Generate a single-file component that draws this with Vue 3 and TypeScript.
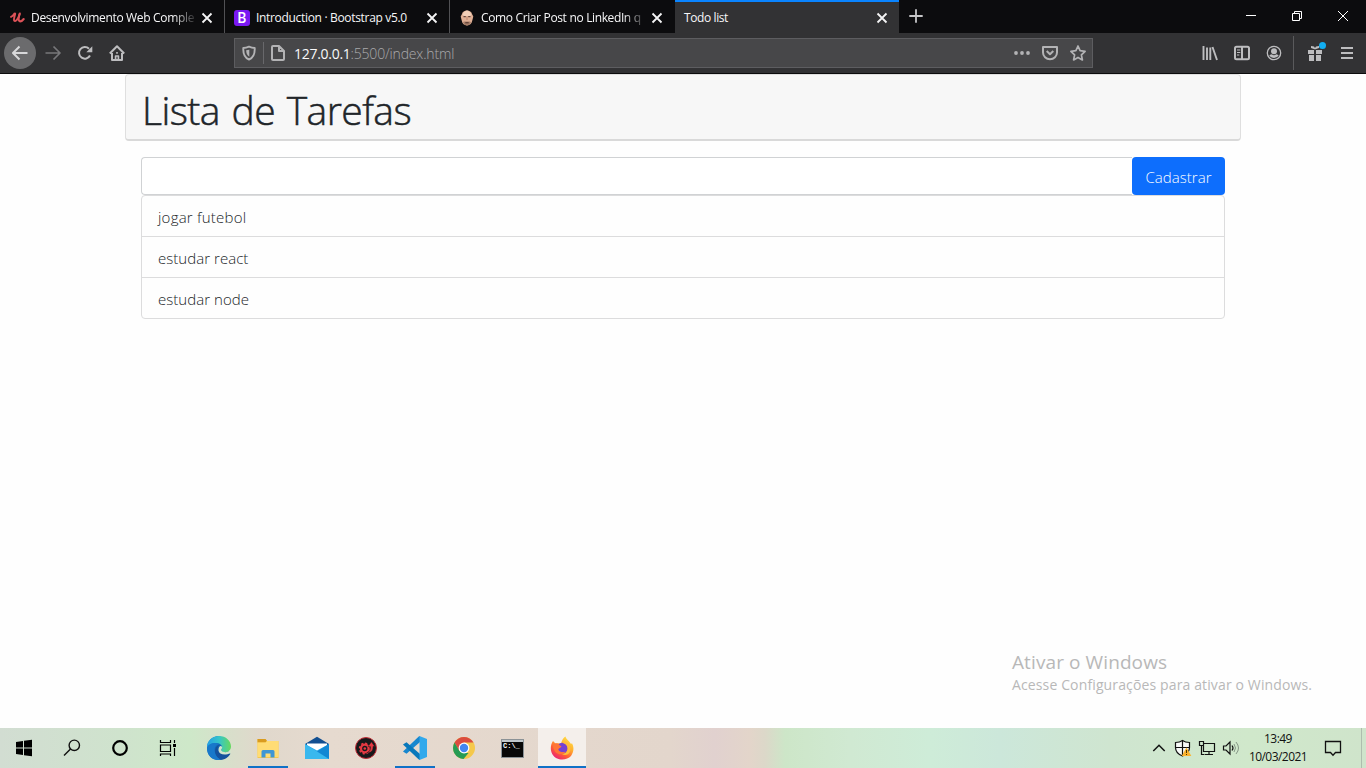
<script setup lang="ts">
import { ref } from 'vue'

interface Tab {
  title: string
  icon: 'udemy' | 'bootstrap' | 'face' | null
  active: boolean
  faded: boolean
  size: string
}

const tabs: Tab[] = [
  { title: 'Desenvolvimento Web Comple', icon: 'udemy', active: false, faded: true, size: 't1' },
  { title: 'Introduction · Bootstrap v5.0', icon: 'bootstrap', active: false, faded: false, size: 't2' },
  { title: 'Como Criar Post no LinkedIn q', icon: 'face', active: false, faded: true, size: 't3' },
  { title: 'Todo list', icon: null, active: true, faded: false, size: 't4' },
]

const tasks = ref<string[]>(['jogar futebol', 'estudar react', 'estudar node'])
const draft = ref('')

function addTask(): void {
  const text = draft.value.trim()
  if (!text) return
  tasks.value.push(text)
  draft.value = ''
}
</script>

<template>
  <div class="screen">
    <header class="tabstrip">
      <div v-for="tab in tabs" :key="tab.title" class="tab" :class="{ active: tab.active }">
        <svg v-if="tab.icon === 'udemy'" class="favicon" viewBox="0 0 16 16">
          <path d="M2 6.800C3.800 6 4.600 4.600 5.600 3.500C7.500 2.400 4 8.800 5.200 10.700C6.500 12.300 9.500 8.500 10.600 4.300" fill="none" stroke="#dc5258" stroke-width="1.900" stroke-linecap="round" stroke-linejoin="round" />
          <path d="M10.800 3.500C9.600 7 8.900 10.700 10.700 11.300C12.300 11.600 13.500 10.600 14.700 9" fill="none" stroke="#dc5258" stroke-width="2.100" stroke-linecap="round" />
        </svg>
        <span v-else-if="tab.icon === 'bootstrap'" class="favicon bs">B</span>
        <svg v-else-if="tab.icon === 'face'" class="favicon" viewBox="0 0 16 16">
          <path d="M3 4C3.500-.8 12.500-.8 13 4L14.300 6.500L13.300 10.500C12.300 17 3.700 17 2.700 10.500L1.700 6.500z" fill="#e0b095" />
          <path d="M3.500 4.500Q8-3.500 12.500 4.500L11 6H5z" fill="#f2cfb8" />
          <path d="M4 12L5.500 11.500H10.500L12 12Q11 15.400 8 15.400T4 12z" fill="#a47b66" />
          <path d="M4.500 6.700h2.300M9.200 6.700h2.300M6.300 12.800h3.400" stroke="#4a3029" />
          <path d="M8 6.500v3.500" stroke="#bd866c" />
        </svg>
        <span class="title" :class="[tab.size, { faded: tab.faded }]">{{ tab.title }}</span>
        <svg class="close" viewBox="0 0 12 12"><path d="M1.500 1.500l9 9M10.500 1.500l-9 9" stroke="#f5f5f6" stroke-width="1.800" /></svg>
      </div>
      <svg class="plus" viewBox="0 0 14 14"><path d="M7 .3v13.400M.3 7h13.400" stroke="#c6c6c8" stroke-width="1.800" /></svg>
      <div class="window-buttons">
        <svg viewBox="0 0 46 32"><path d="M18 15.500h10" stroke="#fff" /></svg>
        <svg viewBox="0 0 46 32" fill="none" stroke="#fff"><path d="M18.500 13.500h7v7h-7zM20.500 13.500v-2h7v7h-2" /></svg>
        <svg viewBox="0 0 46 32"><path d="M18 11l10 10M28 11l-10 10" stroke="#fff" /></svg>
      </div>
    </header>

    <nav class="toolbar">
      <div class="nav-left">
        <span class="tool back">
          <svg viewBox="0 0 16 16"><path d="M15.500 8H1.500M7.500 1.500L1 8l6.500 6.500" /></svg>
        </span>
        <span class="tool dim">
          <svg viewBox="0 0 16 16"><path d="M.5 8h14M8.500 1.500L15 8l-6.500 6.500" stroke-width="1.700" /></svg>
        </span>
        <span class="tool">
          <svg viewBox="0 0 16 16"><path d="M13 10.500A5.800 5.800 0 1 1 12 3.800" /><path d="M15.300 1.300v6h-6z" class="solid" /></svg>
        </span>
        <span class="tool">
          <svg viewBox="0 0 16 16"><path d="M.8 8.500L8 1.300l7.200 7.200M3 8v7h10V8" /><path d="M6.600 15v-4h2.800v4M7.200 7.800h1.600" stroke-width="1.700" /></svg>
        </span>
      </div>
      <div class="urlbar">
        <svg class="shield" viewBox="0 0 16 16"><path d="M8 1.700C10 2.600 12 3 13.700 3C14 9 12 13 8 14.500C4 13 2 9 2.300 3C4 3 6 2.600 8 1.700z" stroke-width="1.900" /><path d="M8.300 4.800v7C6 10.300 5.200 8 5.200 5.300z" class="solid" /></svg>
        <i class="url-sep"></i>
        <svg class="page" viewBox="0 0 16 16"><path d="M3 1h6l5 5v8q0 1-1 1H3q-1 0-1-1V2q0-1 1-1zM9 1v5h5" /></svg>
        <span class="url"><b>127.0.0.1</b>:5500/index.html</span>
        <div class="url-actions">
          <svg viewBox="0 0 16 16"><g class="solid"><circle cx="2" cy="8" r="1.900" /><circle cx="8" cy="8" r="1.900" /><circle cx="14" cy="8" r="1.900" /></g></svg>
          <svg viewBox="0 0 16 16"><path d="M1 2h14v5.500a7 6.700 0 0 1-14 0z" /><path d="M4.700 6L8 9.200 11.300 6" /></svg>
          <svg viewBox="0 0 16 16"><path d="M8 1l2.100 4.700 5 .6-3.700 3.500 1 5.100L8 12.400 3.600 14.900l1-5.100L.9 6.300l5-.6z" stroke-width="1.700" /></svg>
        </div>
      </div>
      <div class="nav-right">
        <span class="tool"><svg viewBox="0 0 16 16"><path d="M1.500 1v14M5 2.500V15M8.300 2.500V15M10.500 2l4.500 13" stroke-width="1.900" /></svg></span>
        <span class="tool"><svg viewBox="0 0 16 16"><rect x="1" y="1.800" width="14" height="12.400" rx="1.500" /><path d="M8 2v12" /><path d="M3 5h3.300M3 7.500h3.300M3 10h2.300" stroke-width="1.100" /></svg></span>
        <span class="tool"><svg viewBox="0 0 16 16"><circle cx="8" cy="8" r="6.700" stroke-width="1.300" /><circle cx="8" cy="6.300" r="3" class="solid" /><path d="M3.300 10.200Q5 9.300 5.800 9.300Q8 11.200 10.200 9.300Q11 9.300 12.700 10.200Q11.300 13 8 13T3.300 10.200z" class="solid" /></svg></span>
        <i class="nav-sep"></i>
        <span class="tool gift">
          <svg viewBox="0 0 16 16"><path d="M1 5h6v4H1zM9 5h6v4H9zM2 10h5v6H2zM9 10h5v6H9zM4 1l3 .5L8 3l1-1.500L12 1v2L8.500 4.300h-1L4 3z" class="solid" /></svg>
          <i class="dot"></i>
        </span>
        <span class="tool menu"><svg viewBox="0 0 16 16"><path d="M2 3h12M2 8h12M2 13h12" /></svg></span>
      </div>
    </nav>

    <main class="page-body">
      <div class="container">
        <div class="card-header"><h1>Lista de Tarefas</h1></div>
        <div class="content">
          <form class="input-group" @submit.prevent="addTask">
            <input v-model="draft" type="text" aria-label="Tarefa" />
            <button type="submit">Cadastrar</button>
          </form>
          <ul class="list">
            <li v-for="task in tasks" :key="task">{{ task }}</li>
          </ul>
        </div>
      </div>
      <div class="watermark">
        <p class="wm-title">Ativar o Windows</p>
        <p class="wm-text">Acesse Configurações para ativar o Windows.</p>
      </div>
    </main>

    <footer class="taskbar">
      <div class="sys">
        <svg viewBox="0 0 48 40"><path d="M16 14l7-1v6.500h-7zM24 12.800l8-1.100v7.800h-8zM16 20.500h7V27l-7-1zM24 20.500h8v7.800l-8-1.100z" /></svg>
        <svg viewBox="0 0 48 40" fill="none" stroke="#111" stroke-width="1.400"><circle cx="26.300" cy="17.300" r="5.200" /><path d="M22.500 21L16 27.500" /></svg>
        <svg viewBox="0 0 48 40"><circle cx="24" cy="20" r="6.800" fill="none" stroke="#000" stroke-width="2.200" /></svg>
        <svg viewBox="0 0 48 40" fill="none" stroke="#000" stroke-width="1.200"><path d="M16.500 12v2.500h10V12M16.500 17h10v6.500h-10zM16.500 28v-2h10v2M30.500 12v3M30.500 20v8" /><path d="M29 16h3v3h-3z" fill="#000" stroke="none" /></svg>
      </div>
      <div class="apps">
        <span class="app">
          <svg viewBox="0 0 24 24">
            <defs>
              <linearGradient id="edgeTop" x1="0" x2="1"><stop offset="0" stop-color="#249ee4" /><stop offset=".5" stop-color="#35c5ca" /><stop offset="1" stop-color="#67d95d" /></linearGradient>
              <linearGradient id="edgeLow" x1="0" x2="1" y1="0" y2="1"><stop stop-color="#168bd8" /><stop offset="1" stop-color="#103f8c" /></linearGradient>
            </defs>
            <path d="M0 12C0 5 5 0 12 0C18 2 20 12 22.500 17.500C20.500 21.500 16.500 24 12 24C5 24 0 19 0 12z" fill="url(#edgeLow)" />
            <path d="M0 11C0 5 5 0 12 0C19 0 24 5 24 10.500C24 15 19.500 17 16 16C13.500 15.300 14 14.400 15 12.800C15.800 9.400 13 7.200 9.500 7C5 6.800 1.500 8.500 0 11z" fill="url(#edgeTop)" />
            <path d="M0 12C2 7 9 5.800 12.500 8.300C9 8 6.500 12 8 16.500C9 20 12 23 15 23.500C6 26 0 20 0 12z" fill="#1878ca" />
            <path d="M12.500 9C9.500 11 10 16 14.500 18C17.500 19.200 20.500 18.500 22.500 17.300C23.500 16.700 23.500 18 22.800 18.800C20.500 22 17 24 14 23.500C10 22 7.500 17.500 8.200 13.500C8.700 10.500 10.500 9 12.500 9z" fill="#14529d" />
            <path d="M14.900 12.600C13.500 14.500 14.300 15.700 17 16.100C20 16.400 22 15.500 24 13.500L23.500 17C18 19.800 12 18.500 11.500 14.500C11.300 12 12.500 10 13.800 10C15.300 10.500 15.500 11.500 14.900 12.600z" fill="#d2e6cc" />
          </svg>
        </span>
        <span class="app running">
          <svg viewBox="0 0 24 24"><path d="M1.500 3h8l1.500 2h11.500v17h-21z" fill="#f6c84f" /><path d="M1.500 3h8l1.500 2-1.500 1.500h-8z" fill="#d99b1f" /><path d="M1.500 6.500h8l1.500-1.500h11.500v16H1.500z" fill="#ffdc74" /><path d="M5.500 21.500v-6q0-1.500 1.500-1.500h10q1.500 0 1.500 1.500v6h-4v-4h-5v4z" fill="#3f96d4" /></svg>
        </span>
        <span class="app">
          <svg viewBox="0 0 24 24"><path d="M0 8L12 .8 24 8v4H0z" fill="#124f91" /><path d="M2 7.500h20v9H2z" fill="#fff" /><path d="M0 8l12 6.500L24 8v15H0z" fill="#29a7e7" /><path d="M24 8L0 23h24z" fill="#1287d3" /><path d="M0 8l24 15H0z" fill="#39b8ee" /></svg>
        </span>
        <span class="app">
          <svg viewBox="0 0 24 24"><circle cx="12" cy="12" r="10.500" fill="#17191b" stroke="#c32b36" stroke-width="1" /><circle cx="10.800" cy="12.500" r="3.800" fill="none" stroke="#e63943" stroke-width="2.300" /><circle cx="10.800" cy="12.500" r="5.300" fill="none" stroke="#e63943" stroke-width="1.400" stroke-dasharray="2.200 1.900" /><circle cx="10.800" cy="12.500" r="1.300" fill="#e63943" /><path d="M12.800 16.800c3.200-1 4-3.500 3.500-6.300h-2.300L17.500 5.800l3.200 4.700h-1.700c.5 4-2 6.700-6.200 6.300z" fill="#e63943" stroke="#17191b" stroke-width=".5" /></svg>
        </span>
        <span class="app running">
          <svg viewBox="0 0 24 24"><path d="M17 0v6L3.500 17.800 0 15.500 15.500.7z" fill="#1787cf" /><path d="M17 24v-6L3.500 6.200 0 8.500l15.500 14.800z" fill="#0878bb" /><path d="M16.500 0L24 3v18l-7.500 3z" fill="#32a9ec" /></svg>
        </span>
        <span class="app">
          <svg viewBox="0 0 24 24"><circle cx="12" cy="12" r="11" fill="#f5c84b" /><path d="M2.500 6.500A11 11 0 0 1 21.500 6.500H12L7.200 14.700z" fill="#db4c3f" /><path d="M7.300 14.700L12 17h4.500L11.500 23A11 11 0 0 1 2.500 6.500z" fill="#269b54" /><circle cx="12" cy="12" r="5.400" fill="#fff" /><circle cx="12" cy="12" r="4.200" fill="#4386f0" /></svg>
        </span>
        <span class="app">
          <span class="console"><i></i><b>C:\_</b></span>
        </span>
        <span class="app running current">
          <svg viewBox="0 0 24 24">
            <defs>
              <linearGradient id="foxFlame" x1=".9" y1="0" x2=".25" y2="1"><stop stop-color="#ffe94a" /><stop offset=".4" stop-color="#ffb02f" /><stop offset=".7" stop-color="#ff5d35" /><stop offset="1" stop-color="#e91f78" /></linearGradient>
            </defs>
            <path d="M3 5L5.500 7.500Q8 6.800 11 7.500C12 4 13.500 1.500 15.500.5C16 3.500 19.500 4.800 21 8L22 7.200C24.500 12 23.500 16.500 21 20C16.500 25 6 25 2.200 18C-.2 13 .8 8.500 3 5z" fill="url(#foxFlame)" />
            <circle cx="12.200" cy="12.300" r="5.500" fill="#7542d1" />
            <path d="M3.500 8C6.500 6.500 8.500 7.500 9.500 9.300L11.500 10.300C11 12 8.700 12 8.300 13.500C9.300 16 13 16.800 15.500 15.500C13.500 19.500 7.500 19 5 15.500C3 12.500 2.800 10 3.500 8z" fill="#ff7537" />
            <path d="M12.500 7C15.500 7.500 17.800 9.800 17.500 13C17.200 16.300 14.500 18 12 18.300C17 20.300 20.500 17.500 20.500 12.800C20.500 9.500 18 6.800 15.500 5.500C14 5.300 13 6 12.500 7z" fill="#ffbd38" />
          </svg>
        </span>
      </div>
      <div class="tray">
        <svg viewBox="0 0 24 24"><path d="M6.300 15l5.700-5.700 5.700 5.700" fill="none" stroke="#111" stroke-width="1.500" /></svg>
        <svg viewBox="0 0 24 24"><path d="M11.500 4.500c2 1.500 4.500 2 7 2v5c0 4-3 7-7 8.500C7.500 18.500 4.500 15.500 4.500 11.500v-5c2.500 0 5-.5 7-2z" fill="#f8faf8" stroke="#111" stroke-width="1.200" /><path d="M11.500 4.500v15M4.500 11.500h14" stroke="#111" stroke-width="1.200" /><path d="M15.500 11.500l4.800 8.500h-9.600z" fill="#fbb22e" /><path d="M15.500 14v3M15.500 18v1" stroke="#4e3400" /></svg>
        <svg viewBox="0 0 24 24" fill="none" stroke="#111" stroke-width="1.200"><path d="M8.500 7.500h11v8h-11zM14 15.500v3M10 18.500h8M4.500 5.500h4v4h-4zM6.500 9.500v9h3" /></svg>
        <svg viewBox="0 0 24 24" fill="none" stroke="#111" stroke-width="1.200"><path d="M4.500 10h2.500l4-4v12l-4-4H4.500z" /><path d="M13 9.500q2 2.500 0 5" /><path d="M15 8q3 4 0 8M17 6q5 6 0 12" stroke="#7d8c7e" stroke-width=".9" /></svg>
      </div>
      <div class="clock"><span>13:49</span><span class="date">10/03/2021</span></div>
      <svg class="notes" viewBox="0 0 24 24"><path d="M4.500 5.500h15v11h-5l-2.500 2.700-2.500-2.700h-5z" fill="none" stroke="#111" stroke-width="1.300" /></svg>
      <i class="desktop-edge"></i>
    </footer>
  </div>
</template>

<style>
body { overflow: hidden; }
</style>

<style scoped>
* { box-sizing: border-box; }
.screen { width: 1366px; height: 768px; display: flex; flex-direction: column; background: #fefefe; font-family: "Noto Sans", "Open Sans", sans-serif; overflow: hidden; }
svg { display: block; flex: none; }

.tabstrip { height: 33px; flex: none; display: flex; background: #0c0c0e; }
.tab { width: 225px; display: flex; align-items: center; padding: 2px 11px 0 9px; border-right: 1px solid #515154; color: #f7f7f8; }
.tab:nth-child(3) { border-right-color: #0c0c0e; }
.tab.active { width: 224px; background: #323234; border-right: 0; border-top: 2px solid #0a84ff; padding-top: 0; }
.favicon { width: 16px; height: 16px; margin-right: 6px; }
.bs { display: grid; place-items: center; flex: none; border-radius: 3px; background: #7a18f2; color: #fff; font: 500 14px/16px "Roboto", sans-serif; }
.title { flex: 1; white-space: nowrap; font: 400 12px/18px "Open Sans", "Noto Sans", sans-serif; margin-right: 5px; }
.title.faded { -webkit-mask-image: linear-gradient(to right, #000 86%, rgba(0, 0, 0, .15) 99%); mask-image: linear-gradient(to right, #000 86%, rgba(0, 0, 0, .15) 99%); }
.t1 { letter-spacing: -.33px; }
.t2 { letter-spacing: -.32px; }
.t3 { letter-spacing: -.4px; word-spacing: .3px; }
.t4 { letter-spacing: -.4px; }
.close { width: 12px; height: 12px; }
.plus { width: 14px; height: 14px; margin: 9px 0 0 10px; }
.window-buttons { display: flex; margin-left: auto; }
.window-buttons svg { width: 46px; height: 32px; }

.toolbar { height: 41px; flex: none; display: flex; align-items: center; background: #323234; border-bottom: 1px solid #0c0c0d; padding: 0 3px 0 4px; }
.toolbar svg { width: 16px; height: 16px; fill: none; stroke: #bdbdbf; stroke-width: 2; stroke-linejoin: round; }
.toolbar .solid { fill: #bdbdbf; stroke: none; }
.nav-left { display: flex; align-items: center; width: 230px; }
.tool { width: 32px; height: 32px; display: grid; place-items: center; position: relative; }
.tool.back { border-radius: 50%; background: #6b6b6d; margin-right: 1px; }
.tool.back svg { stroke: #d8d8da; }
.tool.dim svg { stroke: #78787a; }
.urlbar { width: 859px; height: 30px; display: flex; align-items: center; background: #474749; border: 1px solid #5d5d60; padding: 0 6px; }
.urlbar svg { stroke: #b3b3b5; }
.urlbar .solid { fill: #b3b3b5; }
.url-sep { width: 1px; height: 22px; background: #68686b; margin: 0 6px; }
.page { margin-right: 8px; }
.url { font: 300 14px/20px "Open Sans", "Noto Sans", sans-serif; color: #aaaaac; white-space: nowrap; padding-top: 2px; letter-spacing: -.17px; }
.url b { font-weight: 400; color: #f9f9fa; letter-spacing: -.28px; }
.url-actions { margin-left: auto; display: flex; gap: 12px; }
.nav-right { margin-left: auto; display: flex; align-items: center; }
.nav-sep { width: 1px; height: 34px; margin: 0 5px 0 3px; background: #5a5a5c; }
.dot { position: absolute; right: 5px; top: 5px; width: 7px; height: 7px; border-radius: 50%; background: #12aef2; }

.page-body { flex: 1; min-height: 0; background: #fefefe; position: relative; }
.container { width: 1116px; margin: 0 auto; }
.card-header { height: 67px; border: 1px solid #dfdfdf; border-bottom: 2px solid #d9d9d9; border-radius: 4px; background: #f7f7f7; padding: 7px 16px; }
h1 { margin: 0; font: 300 39px/56px "Open Sans", "Noto Sans", sans-serif; color: #212529; letter-spacing: -.55px; word-spacing: 2px; -webkit-text-stroke: .5px #212529; }
.content { padding: 16px 16px 0; }
.input-group { display: flex; height: 38px; }
.input-group input { flex: 1; min-width: 0; border: 1px solid #d0d2d4; border-right: 0; border-radius: 4px 0 0 4px; background: #fff; padding: 6px 12px; outline: none; }
.input-group button { width: 93px; border: 0; border-radius: 4px; background: #0d6efd; color: #fff; font: 300 15px/24px "Open Sans", "Noto Sans", sans-serif; letter-spacing: .05px; padding: 1px 0 0; white-space: nowrap; }
.list { list-style: none; margin: 0; padding: 0; border: 1px solid #dcdcdd; border-radius: 4px; }
.list li { height: 41px; padding: 9px 16px 7px; border-bottom: 1px solid #dcdcdd; font: 300 15px/24px "Open Sans", "Noto Sans", sans-serif; color: #212529; letter-spacing: .04px; }
.list li:first-child { letter-spacing: .22px; }
.list li:last-child { height: 40px; border-bottom: 0; }
.watermark { position: absolute; left: 1012px; top: 576px; color: #b8b8b8; white-space: nowrap; }
.watermark p { margin: 0; }
.wm-title { font: 400 19px/25px "Open Sans", "Noto Sans", sans-serif; letter-spacing: .1px; }
.wm-text { font: 400 14px/20px "Open Sans", "Noto Sans", sans-serif; letter-spacing: .13px; }

.taskbar { height: 40px; flex: none; display: flex; align-items: center; background: linear-gradient(90deg, #d2ddd2 0, #cfe3cd 120px, #cee8c9 190px, #e0d8cc 260px, #e6dacf 330px, #e3d6cc 670px, #e1d1cf 715px, #e3d5ca 750px, #dcd8c9 765px, #cde6c8 785px, #d0e9d2 850px, #ceecd8 930px, #cce7da 1000px, #cfe5d0 1110px, #d0e8cb 1250px, #cfe4cb 1366px); }
.sys { display: flex; }
.sys svg { width: 48px; height: 40px; }
.apps { display: flex; margin-left: 2px; }
.app { width: 49px; height: 40px; display: grid; place-items: center; }
.app svg { width: 24px; height: 24px; }
.app.running { background: linear-gradient(#1071c7, #1071c7) center bottom / 40px 2px no-repeat; }
.app.current { width: 48px; margin-left: 1px; background: linear-gradient(#1071c7, #1071c7) center bottom / 48px 2px no-repeat, #f4efeb; }
.console { display: block; width: 23px; height: 19px; background: #080808; border: 1px solid #8b9296; color: #fff; overflow: hidden; }
.console i { display: block; height: 2px; background: #c0c7cb; }
.console b { display: block; font: 700 7px/9px "Liberation Mono", monospace; padding-left: 1px; }
.tray { margin-left: auto; display: flex; }
.tray svg { width: 24px; height: 24px; }
.clock { width: 70px; display: flex; flex-direction: column; align-items: center; font: 400 12px/18px "Open Sans", "Noto Sans", sans-serif; color: #111; letter-spacing: -.55px; }
.notes { width: 24px; height: 24px; margin-left: 8px; }
.desktop-edge { width: 1px; height: 40px; background: #aebdae; margin: 0 4px 0 16px; }
</style>
